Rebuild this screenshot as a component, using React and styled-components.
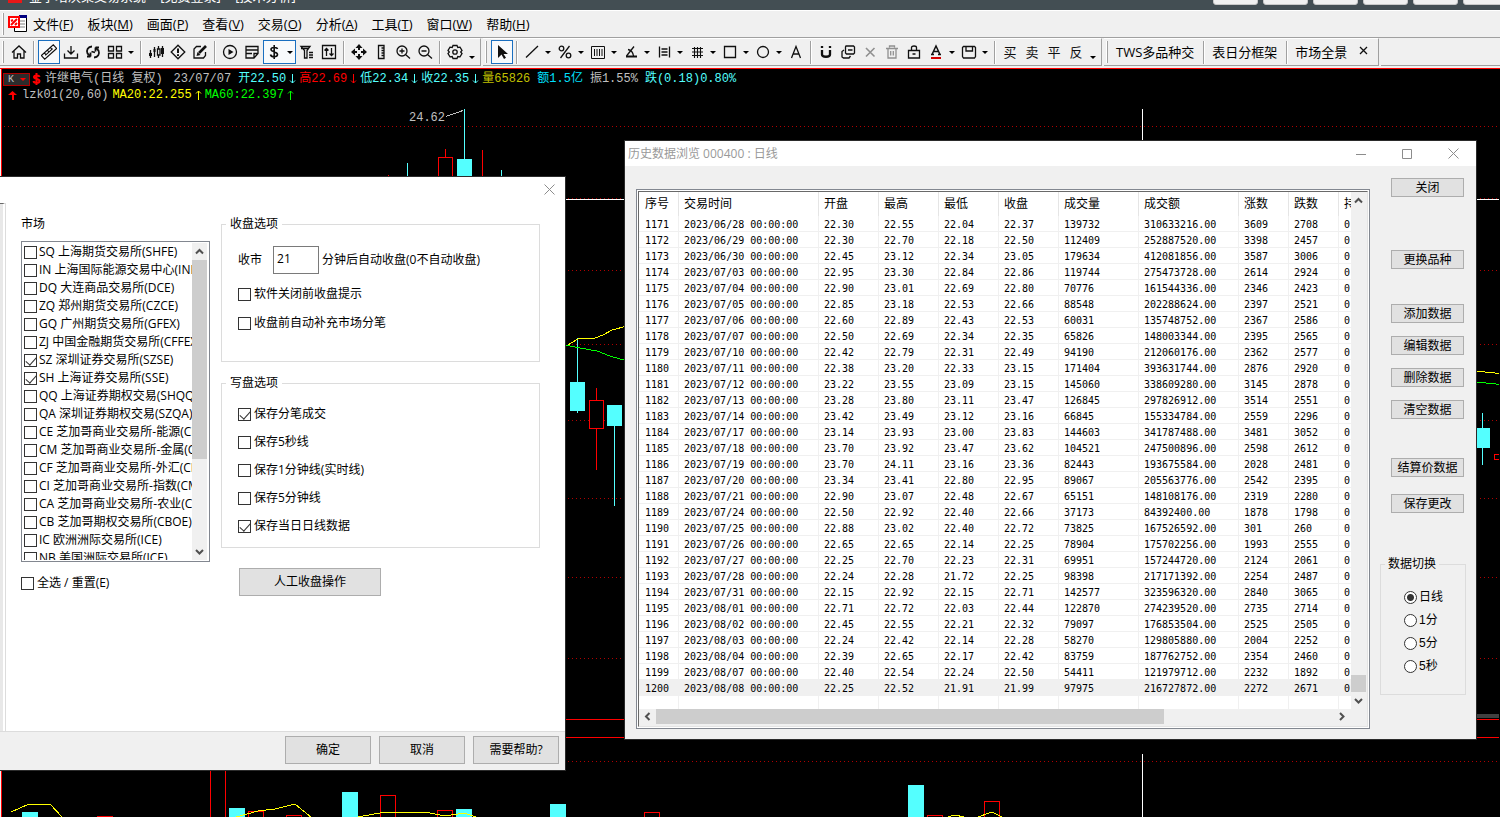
import React, { useState } from 'react';
import styled, { createGlobalStyle } from 'styled-components';

const GlobalStyle = createGlobalStyle`
    * {
        box-sizing: border-box;
    }

    body {
        margin: 0;
        background: #000;
        color: #000;
        font-family: "Open Sans", "Noto Sans CJK SC", sans-serif;
        font-size: 12px;
        line-height: 18px;
    }

    button, input {
        font: inherit;
        color: inherit;
        margin: 0;
    }
`;

const Page = styled.div`
    position: relative;
    display: flex;
    flex-direction: column;
    height: 100vh;
    overflow: hidden;
`;

/* title bar and menu */

const TitleBar = styled.header`
    display: flex;
    flex: none;
    align-items: flex-end;
    height: 10px;
    padding: 0 0 5px 8px;
    overflow: hidden;
    background: #434e53;
    color: #fff;
    font-size: 13px;
    white-space: pre;
`;

const TitleLogo = styled.span`
    width: 14px;
    height: 16px;
    margin: 0 7px 2px 0;
    background: #e81818;
`;

const TitleButtons = styled.div`
    display: flex;
    gap: 5px;
    margin: 0 -8px 0 auto;
`;

const TitleButton = styled.button`
    width: 45px;
    height: 20px;
    border: 1px solid #c8c8c8;
    border-radius: 3px;
    background: #f0f0f0;
`;

const MenuBar = styled.nav`
    display: flex;
    flex: none;
    align-items: center;
    height: 27px;
    padding-left: 2px;
    background: #f0f0f0;
    border-top: 1px solid #fff;
`;

const MenuItem = styled.button`
    padding: 0;
    margin-right: 14px;
    border: 0;
    background: none;
    font-size: 13px;
    line-height: 20px;
    white-space: nowrap;
`;

const MenuLogo = styled.svg`
    width: 19px;
    height: 18px;
    margin-right: 6px;
`;

/* toolbar */

const ToolStrip = styled.div`
    display: flex;
    flex: none;
    gap: 2px;
    height: 32px;
    padding-bottom: 2px;
    background: #f0f0f0;
    border-top: 1px solid #a0a0a0;
    border-bottom: 1px solid #ff0000;
`;

const ToolGroup = styled.div`
    display: flex;
    align-items: center;
    padding: 0 3px 0 2px;
    border-top: 1px solid #fff;
    border-right: 1px solid #a0a0a0;
    border-bottom: 1px solid #a0a0a0;
`;

const ToolFill = styled.div`
    flex: 1;
    border-bottom: 1px solid #a0a0a0;
`;

const Grip = styled.span`
    flex: none;
    width: 2px;
    height: 22px;
    margin-right: 4px;
    border-left: 1px solid #fff;
    border-right: 1px solid #a0a0a0;
`;

const Separator = styled.span`
    flex: none;
    width: 2px;
    height: 23px;
    margin: 0 3px;
    border-left: 1px solid #a0a0a0;
    border-right: 1px solid #fff;
`;

const ToolButton = styled.button`
    display: flex;
    flex: none;
    align-items: center;
    justify-content: center;
    width: ${({ $menu }) => ($menu ? 33 : 22)}px;
    height: 24px;
    padding: 0;
    border: 1px solid ${({ $active }) => ($active ? '#1a6fc0' : 'transparent')};
    background: ${({ $active }) => ($active ? '#f8fafc' : 'none')};
    color: ${({ $off }) => ($off ? '#909090' : '#101010')};
    font-size: 13px;

    svg {
        flex: none;
        width: 16px;
        height: 16px;
        margin-right: ${({ $menu }) => ($menu ? 5 : 0)}px;
    }
`;

const Caret = styled.span`
    flex: none;
    border: 3px solid transparent;
    border-top-color: #000;
    border-bottom: 0;
`;

const Overflow = styled.button`
    display: flex;
    align-items: flex-end;
    justify-content: center;
    width: 11px;
    height: 24px;
    padding: 0 0 5px;
    border: 0;
    background: none;
`;

const TextTool = styled.button`
    padding: 0 6px 0 4px;
    border: 0;
    background: none;
    font-size: 13px;
    white-space: nowrap;
`;

/* chart */

const ChartArea = styled.main`
    position: relative;
    flex: 1;
    min-height: 0;
    border-left: 1px solid #f0f0f0;
    background: #000;
`;

const ChartSvg = styled.svg`
    position: absolute;
    inset: 0 0 0 -1px;
    width: 100%;
    height: 100%;
`;

const Quote = styled.div`
    position: relative;
    padding: 2px 2px 0;
    font-family: "Liberation Mono", "Noto Sans CJK SC", monospace;
    color: #c0c0c0;
`;

const QuoteLine = styled.div`
    display: flex;
    align-items: center;
    height: 16px;
    line-height: 16px;
    white-space: pre;
`;

const Figure = styled.span`
    display: flex;
    align-items: center;
    margin-right: ${({ $gap }) => $gap || 0}px;
    color: ${({ $color }) => $color};

    svg {
        width: 7px;
        height: 10px;
        margin: 0 3px;
    }
`;

const PeriodButton = styled.button`
    display: flex;
    align-items: center;
    justify-content: space-between;
    width: 27px;
    height: 13px;
    margin-right: 2px;
    padding: 0 3px 0 4px;
    border: 1px solid #b00000;
    background: #2c2c2c;
    color: #c0c0c0;
    font-size: 10px;
    line-height: 11px;

    span {
        border-top-color: #ff0000;
    }
`;

const Mark = styled.svg`
    width: 9px;
    height: 12px;
    margin: 0 ${({ $after }) => $after}px 0 ${({ $before }) => $before || 0}px;
`;

/* shared window parts */

const Win = styled.section`
    position: absolute;
    display: flex;
    flex-direction: column;
    border: 1px solid #2b2b2b;
    background: #f0f0f0;
`;

const WinButton = styled.button`
    height: ${({ $small }) => ($small ? 19 : 28)}px;
    padding: 0;
    border: 1px solid #adadad;
    background: #e1e1e1;
    line-height: 16px;
    white-space: nowrap;
`;

const CaptionButton = styled.button`
    display: flex;
    align-items: center;
    justify-content: center;
    width: ${({ $narrow }) => ($narrow ? 32 : 46)}px;
    height: 24px;
    padding: 0;
    border: 0;
    background: none;
    color: #8c8c8c;
`;

const Group = styled.fieldset`
    min-width: 0;
    margin: 0;
    padding: 0 4px;
    border: 1px solid #dcdcdc;

    legend {
        padding: 0 ${({ $tight }) => ($tight ? 3 : 4)}px;
    }
`;

const CheckLabel = styled.label`
    display: flex;
    align-items: center;
    gap: ${({ $gap }) => $gap || 2}px;
    height: 18px;
    white-space: nowrap;
`;

const Check = styled.input.attrs({ type: 'checkbox' })`
    position: relative;
    flex: none;
    appearance: none;
    width: 13px;
    height: 13px;
    border: 1px solid #333;
    background: #fff;

    &:checked::after {
        content: "";
        position: absolute;
        left: 3px;
        top: 0;
        width: 5px;
        height: 9px;
        border: solid #333;
        border-width: 0 1px 1px 0;
        transform: rotate(42deg);
    }
`;

const Radio = styled.input.attrs({ type: 'radio' })`
    flex: none;
    appearance: none;
    width: 13px;
    height: 13px;
    border: 1px solid #333;
    border-radius: 50%;
    background: #fff;

    &:checked {
        background: radial-gradient(circle, #333 0 3px, #fff 4px);
    }
`;

const ScrollButton = styled.button`
    display: flex;
    flex: none;
    align-items: center;
    justify-content: center;
    width: ${({ $flat }) => ($flat ? 17 : 15)}px;
    height: ${({ $flat }) => ($flat ? 15 : 17)}px;
    padding: 0;
    border: 0;
    background: #f0f0f0;
    color: #505050;
`;

/* settings dialog */

const SettingsWindow = styled(Win)`
    left: 0;
    top: 176px;
    width: 566px;
    height: 595px;
    border-left: 0;
`;

const SettingsTitle = styled.div`
    display: flex;
    justify-content: flex-end;
    height: 26px;
    background: #fff;
`;

const SettingsMain = styled.div`
    display: flex;
    flex: 1;
    min-height: 0;
    border-bottom: 1px solid #dcdcdc;
`;

const SideStrip = styled.div`
    width: 5px;
    border-top: 1px solid #696969;
    border-right: 2px solid #fff;
    background: #e8e8e8;
`;

const Sheet = styled.div`
    display: flex;
    flex: 1;
    gap: 11px;
    padding: 12px 25px 0 15px;
    border-left: 1px solid #dcdcdc;
    background: #fff;
`;

const MarketColumn = styled.div`
    flex: none;
    width: 189px;
`;

const MarketBox = styled.div`
    display: flex;
    height: 321px;
    margin: 8px 0 12px;
    padding: 1px;
    border: 1px solid #828790;
`;

const MarketList = styled.div`
    flex: 1;
    min-width: 0;
    padding: 0 0 0 1px;
    overflow: hidden;
`;

const VScroll = styled.div`
    display: flex;
    flex: none;
    flex-direction: column;
    width: 15px;
    margin-right: 1px;
    background: #f0f0f0;
`;

const VThumb = styled.div`
    height: ${({ $size }) => $size}px;
    background: #cdcdcd;
`;

const Spring = styled.div`
    flex: 1;
`;

const OptionColumn = styled.div`
    display: flex;
    flex: 1;
    flex-direction: column;
    align-items: stretch;
    gap: 12px;
`;

const OptionRows = styled.div`
    display: flex;
    flex-direction: column;
    gap: ${({ $gap }) => $gap}px;
    padding: 13px 0 ${({ $bottom }) => $bottom}px 12px;
`;

const MinuteLabel = styled.label`
    display: flex;
    align-items: center;
    gap: 3px;
    white-space: nowrap;
`;

const MinuteInput = styled.input`
    width: 46px;
    height: 28px;
    margin-left: 8px;
    padding: 0 3px 4px;
    border: 1px solid #7a7a7a;
    background: #fff;
`;

const ManualButton = styled(WinButton)`
    width: 142px;
    margin: 8px 0 0 18px;
`;

const SettingsFooter = styled.div`
    display: flex;
    justify-content: flex-end;
    gap: 8px;
    padding: 4px 6px 6px;

    button {
        width: 86px;
    }
`;

/* history window */

const HistoryWindow = styled(Win)`
    left: 624px;
    top: 140px;
    width: 853px;
    height: 600px;
`;

const HistoryTitle = styled.div`
    display: flex;
    align-items: center;
    height: 25px;
    padding-left: 3px;
    background: #fff;
    color: #999;
`;

const HistoryBody = styled.div`
    display: flex;
    flex: 1;
    gap: 10px;
    min-height: 0;
    padding: 0 10px 10px 11px;
    font-family: "Liberation Sans", "Noto Sans CJK SC", sans-serif;
`;

const TableFrame = styled.div`
    display: flex;
    flex: 1;
    min-width: 0;
    margin-top: 23px;
    padding: 1px;
    border: 1px solid #828790;
    background: #fff;
`;

const TableInner = styled.div`
    display: flex;
    flex: 1;
    flex-direction: column;
    min-width: 0;
    border: 1px solid #e3e3e3;
    border-top-color: #696969;
    border-left-color: #696969;
    background: #f0f0f0;
`;

const TableView = styled.div`
    display: flex;
    flex: 1;
    min-height: 0;
`;

const TableClip = styled.div`
    flex: 1;
    min-width: 0;
    overflow: hidden;
    background: #fff;
`;

const DataTable = styled.table`
    width: 740px;
    table-layout: fixed;
    border-collapse: separate;
    border-spacing: 0;
    text-align: left;
    white-space: nowrap;

    th, td {
        overflow: hidden;
        padding: 0 0 0 5px;
        border-right: 1px solid #f0f0f0;
    }

    th:first-child, td:first-child {
        padding-left: 6px;
    }

    th {
        height: 24px;
        border-right-color: #e5e5e5;
        font-weight: 400;
    }

    td {
        height: 16px;
        padding-top: 2px;
        border-bottom: 1px solid #f0f0f0;
        font-family: "DejaVu Sans Mono", monospace;
        font-size: 10px;
        line-height: 13px;
    }
`;

const DataRow = styled.tr`
    background: ${({ $selected }) => ($selected ? '#f0f0f0' : '#fff')};
`;

const HScroll = styled.div`
    display: flex;
    height: 17px;
    padding: 0 17px 2px 0;
`;

const HThumb = styled.div`
    width: 508px;
    background: #cdcdcd;
`;

const SideColumn = styled.div`
    flex: none;
    width: 86px;
    padding-top: 12px;
`;

const ButtonStack = styled.div`
    display: flex;
    flex-direction: column;
    gap: ${({ $gap }) => $gap}px;
    margin: 0 2px ${({ $after }) => $after}px 11px;
`;

const RadioRows = styled.div`
    display: flex;
    flex-direction: column;
    gap: 5px;
    padding: 15px 0 19px 19px;
`;

const line = { fill: 'none', stroke: 'currentColor', strokeWidth: 1.3 };
const solid = { fill: 'currentColor', stroke: 'none' };

const icons = {
    home: <path d="M1 8.500 8 2l7 6.500M3 7v7h3.500v-4h3v4H13V7" />,
    measure: (
        <g transform="rotate(-42 8 8)" strokeWidth="1.100">
            <path d="M0 5.500h16v5H0zM3 8h10M4 5.500v2M8 5.500v2M12 5.500v2" />
        </g>
    ),
    download: <path d="M8 2v8M4.500 6.500 8 10l3.500-3.500M1.500 9.500V14h13V9.500" />,
    refresh: (
        <g strokeWidth="1.800">
            <path d="M7 2.500C3 2.500 1 6 2.500 9.500l3 3M9 13.500c4 0 6-3.500 4.500-7l-3-3" />
            <path d="M5.500 12.500V8.500M5.500 12.500H2M10.500 3.500V7.500M10.500 3.500H14M6.500 7.500l3.500 1" />
        </g>
    ),
    grid: <path d="M1.500 2.500h5v4.500h-5zM9.500 2.500h5v4.500h-5zM1.500 9.500h5V14h-5zM9.500 9.500h5V14h-5z" />,
    candles: (
        <>
            <path d="M2.500 6v8M6.500 3v10M10.500 2v12M14.500 2v11" />
            <path {...solid} d="M1 9h3v3H1zM13 4h3v6h-3z" />
            <path fill="#fff" d="M9.500 5h2.500v6H9.500z" />
            <path {...solid} d="M5.500 5h2v3h-2z" />
        </>
    ),
    alert: (
        <>
            <path d="m8 1.200 6.800 6.800L8 14.800 1.200 8z" />
            <path strokeWidth="2" d="M8 4.500v4.500M8 10.300v1.700" />
        </>
    ),
    edit: (
        <>
            <path d="M9 2.500H4.500L2 5v9h9.500l2-2.500V8" />
            <path strokeWidth="2.600" d="m7 9 7-7" />
            <path {...solid} d="m4.500 12 1-4 3 3z" />
        </>
    ),
    play: (
        <>
            <circle cx="8" cy="8" r="6.500" />
            <path {...solid} d="m6.500 5 5 3-5 3z" />
        </>
    ),
    note: <path d="M2 2.500h12v7L10 14H2zM2 6h12M2 9.500h6M10 14V9.500h4" />,
    dollar: <path strokeWidth="1.600" d="M11.500 5C11 3 5 3 5 5.500 5 8 11.500 7.500 11.500 10.500c0 3-6.500 3-7 0M8.200 1v14" />,
    filter: <path d="M2 2.500h9L8 6.500V14H5.500V6.500zM2 4.500h8M10 8.500h4M10 11h4M10 13.500h4" />,
    sort: <path d="M1.500 1.500h13v13h-13zM5.500 12V4.500M3.500 6.500l2-2 2 2M10.500 4v7.500M8.500 9.500l2 2 2-2" />,
    move: (
        <>
            <path {...solid} d="m8 0 3.500 4h-7zM8 16l3.500-4h-7zM0 8l4-3.500v7zM16 8l-4-3.500v7z" />
            <path strokeWidth="2" d="M8 4v2M8 10v2M4 8h2M10 8h2" />
        </>
    ),
    ruler: <path d="M5.500 1.500h5.500v13H5.500zM8.500 4H11M8.500 6.500H11M8.500 9H11M8.500 11.500H11" />,
    zoomIn: <path d="M12 7A5 5 0 1 1 2 7a5 5 0 0 1 10 0zM10.500 10.500l4.500 4M7 4.500v5M4.500 7h5" />,
    zoomOut: <path d="M12 7A5 5 0 1 1 2 7a5 5 0 0 1 10 0zM10.500 10.500l4.500 4M4.500 7h5" />,
    gear: (
        <>
            <path d="M6 1.500h4l.8 2 2.200-.3 2 3.300L13.700 8l1.300 1.500-2 3.300-2.200-.3-.8 2H6l-.8-2-2.200.3-2-3.300L2.300 8 1 6.500l2-3.300 2.200.3z" />
            <circle cx="8" cy="8" r="2.200" />
        </>
    ),
    pointer: <path {...solid} d="M4 1v13l3.500-3.500L10 15l2-1.200L9.500 10h4.500z" />,
    trend: <path d="M2 13.500 14 2" />,
    percent: (
        <>
            <circle cx="4.500" cy="4.500" r="2.300" />
            <circle cx="11.500" cy="11.500" r="2.300" />
            <path d="M12.500 2 3.500 14" />
        </>
    ),
    columns: <path strokeWidth="1" d="M1.500 2.500h13v12h-13zM4.500 5v7M7 5v7M9.500 5v7M12 5v7" />,
    angle: (
        <>
            <path d="M11 2.500 3.500 12M5 5.500C8 6 10 8.500 10.500 12" />
            <path strokeWidth="2" d="M3 12.500h11" />
        </>
    ),
    levels: <path d="M3.500 2.500v11M13.500 2.500v11M5.500 5h6M5.500 8h6M5.500 11h6" />,
    hash: <path strokeWidth="1.100" d="M3 4.500h11M3 8h11M3 11.500h11M5.500 3v11M8.500 3v11M11.500 3v11" />,
    square: <path d="M2.500 2.500h11v11h-11z" />,
    circle: <circle cx="8" cy="8" r="5.500" />,
    letter: <path d="M3.500 14 8 2.500 12.500 14M5 10h6" />,
    magnet: <path strokeWidth="2.300" d="M4 2v2M12 2v2M4 6v4.500c0 3 8 3 8 0V6" />,
    copy: (
        <>
            <path d="M6 2h7.500l1 1v6l-1 1h-7l-1-1V3zM8 6h4.500" />
            <path d="M4 6 2 7.500V13l1.500 1H9l1.500-2" />
        </>
    ),
    cross: <path strokeWidth="1.600" d="m4 4 8.500 8.500M12.500 4 4 12.500" />,
    trash: <path d="M5.500 3.500V2h5v1.500M2 4.500h12M4 4.500V14h8V4.500M6.700 7v4.500M9.300 7v4.500" />,
    lock: <path d="M2.500 6.500h11V14h-11zM5.500 6V3.500c0-2 5-2 5 0V6M6.500 10h3" />,
    colour: (
        <>
            <path d="M4 10.500 8 2l4 8.500M5.500 7.500h5M3 10.500h3M10 10.500h3" strokeWidth="1.500" />
            <path stroke="#d40000" strokeWidth="2" d="M3 14h10" />
        </>
    ),
    save: <path d="M2.500 2.500h11l1 1v9l-1 1.500h-11l-1-1.500v-9zM5 2.500V7h6.500V2.500" />,
};

const Icon = ({ name }) => (
    <svg viewBox="0 0 16 16" {...line}>{icons[name]}</svg>
);

const mainTools = [
    'home', '|', 'measure*', 'download', 'refresh', 'grid+', '|',
    'candles', 'alert', 'edit', '|',
    'play', 'note', 'dollar*+', 'filter', 'sort', '|',
    'move', 'ruler', 'zoomIn', 'zoomOut', '|', 'gear',
];

const drawTools = [
    'pointer*', '|', 'trend+', 'percent+', 'columns+', 'angle+', 'levels+', 'hash+',
    'square+', 'circle+', 'letter', '|',
    'magnet', 'copy', 'cross-', 'trash-', 'lock', 'colour+', 'save+', '|',
];

// "*" pressed, "+" with a drop-down arrow, "-" disabled
const Tools = ({ items }) => items.map((item, i) => {
    if (item === '|') return <Separator key={i} />;
    const menu = item.includes('+');
    const name = item.replace(/[*+-]/g, '');
    return (
        <ToolButton
            key={i}
            aria-label={name}
            $menu={menu}
            $active={item.includes('*')}
            $off={item.includes('-')}
        >
            <Icon name={name} />
            {menu && <Caret />}
        </ToolButton>
    );
});

const menus = [
    ['文件', 'F'], ['板块', 'M'], ['画面', 'P'], ['查看', 'V'], ['交易', 'O'],
    ['分析', 'A'], ['工具', 'T'], ['窗口', 'W'], ['帮助', 'H'],
];

const markets = [
    'SQ 上海期货交易所(SHFE)',
    'IN 上海国际能源交易中心(INE)',
    'DQ 大连商品交易所(DCE)',
    'ZQ 郑州期货交易所(CZCE)',
    'GQ 广州期货交易所(GFEX)',
    'ZJ 中国金融期货交易所(CFFEX)',
    'SZ 深圳证券交易所(SZSE)',
    'SH 上海证券交易所(SSE)',
    'QQ 上海证券期权交易(SHQQ)',
    'QA 深圳证券期权交易(SZQA)',
    'CE 芝加哥商业交易所-能源(CME)',
    'CM 芝加哥商业交易所-金属(CME)',
    'CF 芝加哥商业交易所-外汇(CME)',
    'CI 芝加哥商业交易所-指数(CME)',
    'CA 芝加哥商业交易所-农业(CME)',
    'CB 芝加哥期权交易所(CBOE)',
    'IC 欧洲洲际交易所(ICE)',
    'NB 美国洲际交易所(ICE)',
];

const saveOptions = [
    ['保存分笔成交', true],
    ['保存5秒线', false],
    ['保存1分钟线(实时线)', false],
    ['保存5分钟线', false],
    ['保存当日日线数据', true],
];

const columns = [
    ['序号', 40], ['交易时间', 140], ['开盘', 60], ['最高', 60], ['最低', 60], ['收盘', 60],
    ['成交量', 80], ['成交额', 100], ['涨数', 50], ['跌数', 50], ['持仓量', 40],
];

const history = `
06/28 22.30 22.55 22.04 22.37 139732 310633216.00 3609 2708
06/29 22.30 22.70 22.18 22.50 112409 252887520.00 3398 2457
06/30 22.45 23.12 22.34 23.05 179634 412081856.00 3587 3006
07/03 22.95 23.30 22.84 22.86 119744 275473728.00 2614 2924
07/04 22.90 23.01 22.69 22.80 70776 161544336.00 2346 2423
07/05 22.85 23.18 22.53 22.66 88548 202288624.00 2397 2521
07/06 22.60 22.89 22.43 22.53 60031 135748752.00 2367 2586
07/07 22.50 22.69 22.34 22.35 65826 148003344.00 2395 2565
07/10 22.42 22.79 22.31 22.49 94190 212060176.00 2362 2577
07/11 22.38 23.20 22.33 23.15 171404 393631744.00 2876 2920
07/12 23.22 23.55 23.09 23.15 145060 338609280.00 3145 2878
07/13 23.28 23.80 23.11 23.47 126845 297826912.00 3514 2551
07/14 23.42 23.49 23.12 23.16 66845 155334784.00 2559 2296
07/17 23.14 23.93 23.00 23.83 144603 341787488.00 3481 3052
07/18 23.70 23.92 23.47 23.62 104521 247500896.00 2598 2612
07/19 23.70 24.11 23.16 23.36 82443 193675584.00 2028 2481
07/20 23.34 23.41 22.80 22.95 89067 205563776.00 2542 2395
07/21 22.90 23.07 22.48 22.67 65151 148108176.00 2319 2280
07/24 22.50 22.92 22.40 22.66 37173 84392400.00 1878 1798
07/25 22.88 23.02 22.40 22.72 73825 167526592.00 301 260
07/26 22.65 22.65 22.14 22.25 78904 175702256.00 1993 2555
07/27 22.25 22.70 22.23 22.31 69951 157244720.00 2124 2061
07/28 22.24 22.28 21.72 22.25 98398 217171392.00 2254 2487
07/31 22.15 22.92 22.15 22.71 142577 323596320.00 2840 3065
08/01 22.71 22.72 22.03 22.44 122870 274239520.00 2735 2714
08/02 22.45 22.55 22.21 22.32 79097 176853504.00 2525 2505
08/03 22.24 22.42 22.14 22.28 58270 129805880.00 2004 2252
08/04 22.39 22.65 22.17 22.42 83759 187762752.00 2354 2460
08/07 22.40 22.54 22.24 22.50 54411 121979712.00 2232 1892
08/08 22.25 22.52 21.91 21.99 97975 216727872.00 2272 2671
`.trim().split('\n').map((row, i) => {
    const [day, ...values] = row.split(' ');
    return [1171 + i, `2023/${day} 00:00:00`, ...values, '0'];
});

const CYAN = '#54ffff';
const RED = '#ff0000';

// x, top, bottom of the body, then top and bottom of the wick
const candles = [
    [438, 157, 190, 149, 157, RED],
    [457, 159, 190, 109, 190, CYAN],
    [570, 382, 411, 338, 413, CYAN],
    [589, 400, 429, 388, 470, RED],
    [607, 405, 426, 405, 506, CYAN],
    [1475, 428, 448, 413, 465, CYAN],
    [1494, 454, 460, 454, 454, RED],
];

const wicks = [
    [388, 175, RED], [407, 163, CYAN], [482, 150, RED], [501, 170, CYAN],
];

const volumes = [
    [22, 812, CYAN], [97, 816, RED], [229, 808, CYAN], [248, 811, RED], [286, 815, RED],
    [342, 792, CYAN], [380, 795, RED], [437, 810, RED], [456, 809, CYAN], [550, 804, CYAN],
    [644, 812, RED], [908, 785, CYAN], [927, 815, RED], [984, 801, RED],
];

const gridLines = [126, 198, 270, 344, 420, 498, 577, 658, 761];

const Chart = () => (
    <ChartSvg>
        <defs>
            <pattern id="dots" width="4" height="1" patternUnits="userSpaceOnUse">
                <rect width="1" height="1" fill="#b00000" />
            </pattern>
        </defs>
        <g transform="translate(0 -69)" shapeRendering="crispEdges">
            {gridLines.map(y => (
                <rect key={y} x="2" y={y} width="100%" height="1" fill="url(#dots)" />
            ))}
            <path d="M1.500 69V817" stroke={RED} />
            <line x1="2" x2="100%" y1="199.500" y2="199.500" stroke="#fff" />
            <line x1="2" x2="100%" y1="719.500" y2="719.500" stroke={RED} />
            <line x1="2" x2="100%" y1="737.500" y2="737.500" stroke={RED} />
            <line x1="1470" x2="100%" y1="716" y2="716" stroke="#404040" strokeWidth="4" />
            <path d="M1142.500 109v40M1142.500 754v70" stroke="#fff" />
            <path d="M210.500 765v60M225.500 765v60" stroke={RED} />
            <path d="M446 116.500 463 110.500" stroke="#c0c0c0" />
            {wicks.map(([x, y, color]) => (
                <path key={x} d={`M${x + 0.5} ${y}V190`} stroke={color} />
            ))}
            {candles.map(([x, top, bottom, high, low, color]) => (
                <g key={x} stroke={color}>
                    <path d={`M${x + 7.5} ${high}V${low}`} />
                    <rect x={x + 0.5} y={top + 0.5} width="14" height={bottom - top - 1} fill={color === RED ? '#000' : color} />
                </g>
            ))}
            {volumes.map(([x, y, color]) => (
                <rect key={x} x={x + 0.5} y={y + 0.5} width="15" height="40" fill={color === RED ? '#000' : color} stroke={color} />
            ))}
            <g fill="none" stroke="#ffff00">
                <path d="m560 351 6-5 12-7 17-1 8-3 9-5 15-4M1470 371l15 1 20 2" />
                <path d="m11 812 18-8h21l13 14M236 817l22-6 17-2 20-5 17 14M358 817l27-5h30l15 1 15 3 19-3 12 4M944 818l11-3 9 2M978 817l14-5 10 5" />
            </g>
            <path d="m560 344 20 4 17 3 13 5 17 5M1470 382l16 1 20 2" fill="none" stroke="#00ff00" />
        </g>
        <text x="409" y="52" fill="#c0c0c0" fontFamily="Liberation Mono, monospace" fontSize="12">24.62</text>
    </ChartSvg>
);

const Arrow = ({ up }) => (
    <svg viewBox="0 0 7 10" fill="none" stroke="currentColor">
        <path d={up ? 'M3.500 10V1M1 3.500 3.500 1 6 3.500' : 'M3.500 0v9M1 6.500 3.500 9 6 6.500'} />
    </svg>
);

const QuoteHeader = () => (
    <Quote>
        <QuoteLine>
            <PeriodButton>K<Caret /></PeriodButton>
            <Mark viewBox="0 0 9 12" $after={4} fill="none" stroke={RED} strokeWidth="2">
                <path d="M7.500 4C7 2 2 2 2 4c0 2.500 5.500 1.500 5.500 4 0 2.500-5.500 2.500-6 0M4.500 0v12" />
            </Mark>
            <Figure $gap={11}>许继电气(日线 复权)</Figure>
            <Figure $gap={7}>23/07/07</Figure>
            <Figure $color={CYAN}>开22.50<Arrow /></Figure>
            <Figure $color={RED}>高22.69<Arrow /></Figure>
            <Figure $color={CYAN}>低22.34<Arrow /></Figure>
            <Figure $color={CYAN}>收22.35<Arrow /></Figure>
            <Figure $color="#c0c000" $gap={7}>量65826</Figure>
            <Figure $color="#00e0ff" $gap={7}>额1.5亿</Figure>
            <Figure $color="#c0c0c0" $gap={7}>振1.55%</Figure>
            <Figure $color={CYAN}>跌(0.18)0.80%</Figure>
        </QuoteLine>
        <QuoteLine>
            <Mark viewBox="0 0 9 12" $before={5} $after={5} fill={RED}>
                <path d="m4.500 2 4.500 4H6v5H4V6H0z" />
            </Mark>
            <Figure $gap={4}>lzk01(20,60)</Figure>
            <Figure $color="#ffff00">MA20:22.255<Arrow up /></Figure>
            <Figure $color="#00ff00">MA60:22.397<Arrow up /></Figure>
        </QuoteLine>
    </Quote>
);

const chevrons = {
    up: 'M1 6.500 4.500 3 8 6.500',
    down: 'M1 3 4.500 6.500 8 3',
    left: 'M6.500 1 3 4.500 6.500 8',
    right: 'M3 1 6.500 4.500 3 8',
};

const Scroller = ({ to }) => (
    <ScrollButton aria-label={to} $flat={to === 'left' || to === 'right'}>
        <svg width="9" height="9" fill="none" stroke="currentColor" strokeWidth="2">
            <path d={chevrons[to]} />
        </svg>
    </ScrollButton>
);

const CloseGlyph = () => (
    <svg width="11" height="11" fill="none" stroke="currentColor">
        <path d="m.5.5 10 10M10.500.5l-10 10" />
    </svg>
);

const SettingsDialog = () => {
    const [minutes, setMinutes] = useState('21');

    return (
        <SettingsWindow>
            <SettingsTitle>
                <CaptionButton $narrow aria-label="关闭"><CloseGlyph /></CaptionButton>
            </SettingsTitle>
            <SettingsMain>
                <SideStrip />
                <Sheet>
                    <MarketColumn>
                        <div>市场</div>
                        <MarketBox>
                            <MarketList>
                                {markets.map(name => (
                                    <CheckLabel key={name}>
                                        <Check defaultChecked={/^(SZ|SH)/.test(name)} />
                                        {name}
                                    </CheckLabel>
                                ))}
                            </MarketList>
                            <VScroll>
                                <Scroller to="up" />
                                <VThumb $size={199} />
                                <Spring />
                                <Scroller to="down" />
                            </VScroll>
                        </MarketBox>
                        <CheckLabel $gap={3}><Check />全选 / 重置(E)</CheckLabel>
                    </MarketColumn>
                    <OptionColumn>
                        <Group>
                            <legend>收盘选项</legend>
                            <OptionRows $gap={11} $bottom={29}>
                                <MinuteLabel>
                                    收市
                                    <MinuteInput value={minutes} onChange={e => setMinutes(e.target.value)} />
                                    分钟后自动收盘(0不自动收盘)
                                </MinuteLabel>
                                <CheckLabel $gap={3}><Check />软件关闭前收盘提示</CheckLabel>
                                <CheckLabel $gap={3}><Check />收盘前自动补充市场分笔</CheckLabel>
                            </OptionRows>
                        </Group>
                        <Group>
                            <legend>写盘选项</legend>
                            <OptionRows $gap={10} $bottom={12}>
                                {saveOptions.map(([name, on]) => (
                                    <CheckLabel key={name} $gap={3}>
                                        <Check defaultChecked={on} />
                                        {name}
                                    </CheckLabel>
                                ))}
                            </OptionRows>
                        </Group>
                        <ManualButton>人工收盘操作</ManualButton>
                    </OptionColumn>
                </Sheet>
            </SettingsMain>
            <SettingsFooter>
                <WinButton>确定</WinButton>
                <WinButton>取消</WinButton>
                <WinButton>需要帮助?</WinButton>
            </SettingsFooter>
        </SettingsWindow>
    );
};

const HistoryBrowser = () => {
    const [period, setPeriod] = useState('日线');

    return (
        <HistoryWindow>
            <HistoryTitle>
                历史数据浏览 000400 : 日线
                <Spring />
                <CaptionButton aria-label="最小化">
                    <svg width="10" height="10"><path d="M0 5.500h10" stroke="currentColor" /></svg>
                </CaptionButton>
                <CaptionButton aria-label="最大化">
                    <svg width="10" height="10"><path d="M.5.5h9v9h-9z" fill="none" stroke="currentColor" /></svg>
                </CaptionButton>
                <CaptionButton aria-label="关闭"><CloseGlyph /></CaptionButton>
            </HistoryTitle>
            <HistoryBody>
                <TableFrame>
                    <TableInner>
                        <TableView>
                            <TableClip>
                                <DataTable>
                                    <colgroup>
                                        {columns.map(([name, width]) => <col key={name} width={width} />)}
                                    </colgroup>
                                    <thead>
                                        <tr>{columns.map(([name]) => <th key={name}>{name}</th>)}</tr>
                                    </thead>
                                    <tbody>
                                        {history.map(row => (
                                            <DataRow key={row[0]} $selected={row[0] === 1200}>
                                                {row.map((value, i) => <td key={i}>{value}</td>)}
                                            </DataRow>
                                        ))}
                                        <DataRow>{columns.map(([name]) => <td key={name} />)}</DataRow>
                                    </tbody>
                                </DataTable>
                            </TableClip>
                            <VScroll>
                                <Scroller to="up" />
                                <Spring />
                                <VThumb $size={17} />
                                <Scroller to="down" />
                            </VScroll>
                        </TableView>
                        <HScroll>
                            <Scroller to="left" />
                            <HThumb />
                            <Spring />
                            <Scroller to="right" />
                        </HScroll>
                    </TableInner>
                </TableFrame>
                <SideColumn>
                    <ButtonStack $after={53}>
                        <WinButton $small>关闭</WinButton>
                    </ButtonStack>
                    <ButtonStack $after={35}>
                        <WinButton $small>更换品种</WinButton>
                    </ButtonStack>
                    <ButtonStack $gap={13} $after={39}>
                        <WinButton $small>添加数据</WinButton>
                        <WinButton $small>编辑数据</WinButton>
                        <WinButton $small>删除数据</WinButton>
                        <WinButton $small>清空数据</WinButton>
                    </ButtonStack>
                    <ButtonStack $gap={17} $after={42}>
                        <WinButton $small>结算价数据</WinButton>
                        <WinButton $small>保存更改</WinButton>
                    </ButtonStack>
                    <Group $tight>
                        <legend>数据切换</legend>
                        <RadioRows>
                            {['日线', '1分', '5分', '5秒'].map(name => (
                                <CheckLabel key={name}>
                                    <Radio name="period" checked={period === name} onChange={() => setPeriod(name)} />
                                    {name}
                                </CheckLabel>
                            ))}
                        </RadioRows>
                    </Group>
                </SideColumn>
            </HistoryBody>
        </HistoryWindow>
    );
};

const App = () => (
    <Page>
        <GlobalStyle />
        <TitleBar>
            <TitleLogo />
            金字塔决策交易系统  - [免费登录]  - [技术分析]
            <TitleButtons>
                {[1, 2, 3, 4, 5, 6].map(n => <TitleButton key={n} aria-label={`面板 ${n}`} />)}
            </TitleButtons>
        </TitleBar>
        <MenuBar>
            <Grip />
            <MenuLogo viewBox="0 0 19 18">
                <path d="M6.500 1.500h12v15h-12z" fill="#fff" stroke="#000" />
                <path d="M11 0h8v3h-8z" fill="#000080" />
                <path d="M12 6h5M12 9h5M12 12h5" stroke="#808080" />
                <path d="M1 2h10v10H1z" fill="#fff" stroke="#ff0000" strokeWidth="2" />
                <path d="m3 10 6-6M3 6l2-1M7 10l2-2" stroke="#ff0000" strokeWidth="2" />
            </MenuLogo>
            {menus.map(([name, key]) => (
                <MenuItem key={key}>{name}(<u>{key}</u>)</MenuItem>
            ))}
        </MenuBar>
        <ToolStrip>
            <ToolGroup>
                <Grip />
                <Tools items={mainTools} />
                <Overflow aria-label="更多"><Caret /></Overflow>
            </ToolGroup>
            <ToolGroup>
                <Grip />
                <Tools items={drawTools} />
                {['买', '卖', '平', '反'].map(name => <ToolButton key={name}>{name}</ToolButton>)}
                <Overflow aria-label="更多"><Caret /></Overflow>
            </ToolGroup>
            <ToolGroup>
                <Grip />
                <TextTool>TWS多品种交</TextTool>
                <Separator />
                <TextTool>表日分框架</TextTool>
                <Separator />
                <TextTool>市场全景</TextTool>
                <ToolButton aria-label="关闭页签">
                    <svg viewBox="0 0 16 16" {...line}><path d="m4 3 7 7M11 3l-7 7" /></svg>
                </ToolButton>
            </ToolGroup>
            <ToolFill />
        </ToolStrip>
        <ChartArea>
            <Chart />
            <QuoteHeader />
        </ChartArea>
        <SettingsDialog />
        <HistoryBrowser />
    </Page>
);

export default App;
